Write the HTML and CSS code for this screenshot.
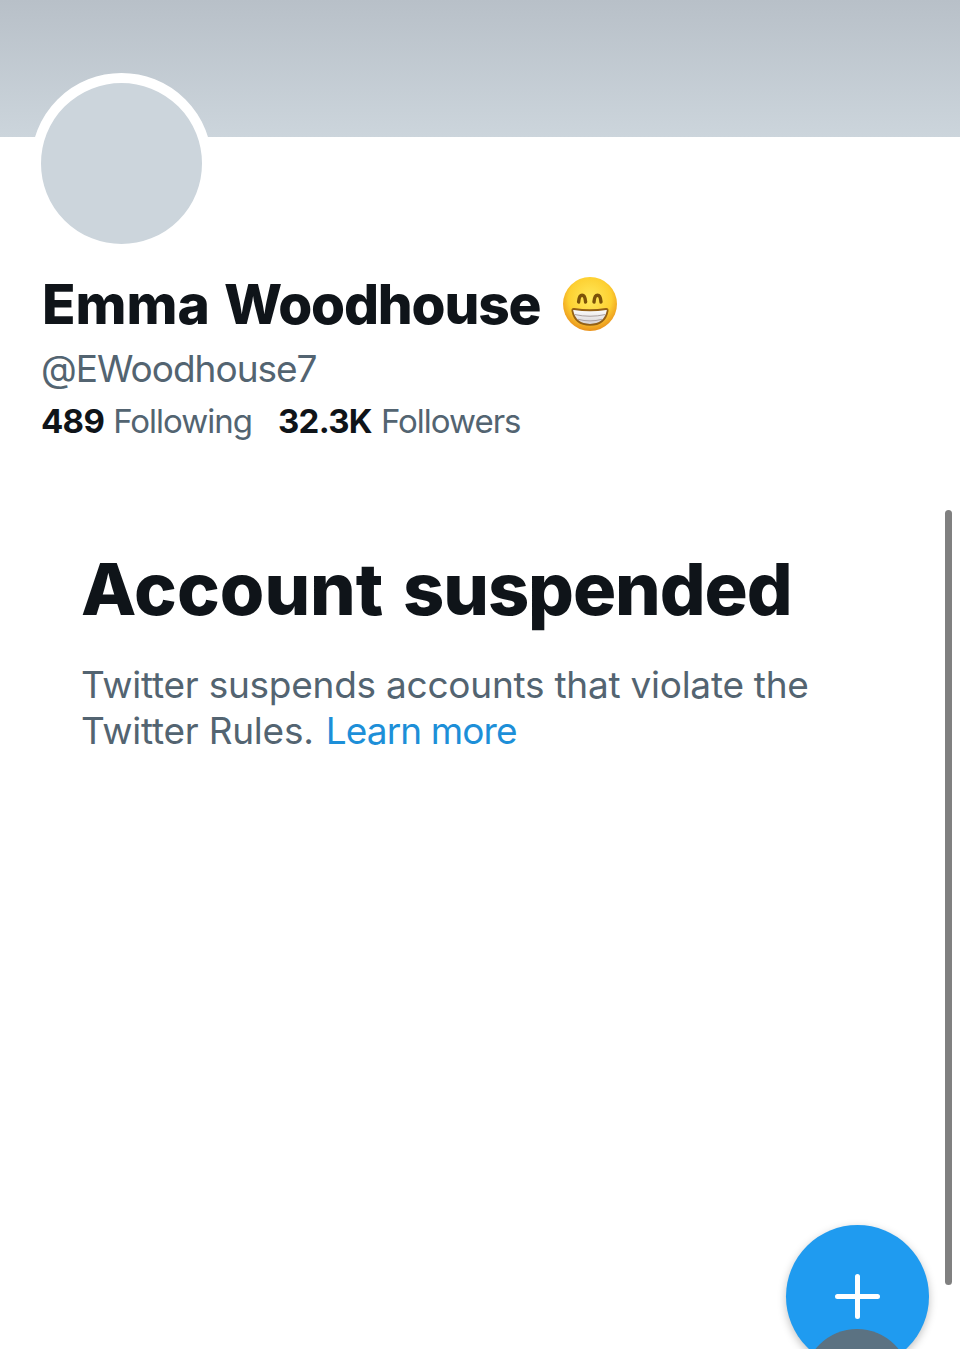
FILE: index.html
```html
<!DOCTYPE html>
<html lang="en">
<head>
  <meta charset="UTF-8" />
  <meta name="viewport" content="width=device-width, initial-scale=1.0"/>
  <title>Emma Woodhouse</title>
  <link rel="stylesheet" href="styles.css">
</head>
<body>
  <div class="banner"></div>

  <div class="profile">
    <div class="avatar"></div>
    <h2 class="name">
      <span class="name-text">Emma <span class="surname">Woodhouse</span></span>
      <svg class="emoji" viewBox="0 0 54 54">
        <defs>
          <radialGradient id="face" cx="50%" cy="40%" r="61%">
            <stop offset="0" stop-color="#ffe95c"/>
            <stop offset="0.65" stop-color="#fdd031"/>
            <stop offset="1" stop-color="#e98f1b"/>
          </radialGradient>
          <linearGradient id="teeth" x1="0" y1="0" x2="0" y2="1">
            <stop offset="0" stop-color="#ffffff"/>
            <stop offset="1" stop-color="#d5d0d2"/>
          </linearGradient>
        </defs>
        <circle cx="27" cy="27" r="27" fill="url(#face)"/>
        <path d="M15.6 25C16 20 17.4 18.3 19.1 18.3S22.2 20 22.6 25M31 25C31.4 20 32.8 18.3 34.5 18.3S37.6 20 38 25" fill="none" stroke="#7b5208" stroke-width="3.4" stroke-linecap="round"/>
        <path d="M11 32Q27 34.5 43 32Q45 31.8 44.6 34C42.7 43.5 36 47.8 27 47.8S11.3 43.5 9.4 34Q9 31.8 11 32Z" fill="url(#teeth)" stroke="#936016" stroke-width="1.8"/>
        <path d="M11.5 37.5Q27 41 42.5 37.5M15 42.3Q27 45.5 39 42.3" fill="none" stroke="#aaa0a0" stroke-width="1"/>
      </svg>
    </h2>
    <div class="handle">@EWoodhouse7</div>
    <div class="stats">
      <div class="stat"><b>489</b><span>Following</span></div>
      <div class="stat"><b>32.3K</b><span>Followers</span></div>
    </div>
  </div>

  <div class="notice">
    <h1>Account <span class="status">suspended</span></h1>
    <p>Twitter suspends accounts that violate the<br>
      Twitter Rules. <a href="#">Learn more</a></p>
  </div>

  <div class="scrollbar"></div>
  <div class="compose-area">
    <div class="compose">
      <svg viewBox="0 0 45 45">
        <path d="M22.5 2.5v40M2.5 22.5h40" stroke="#fff" stroke-width="5" stroke-linecap="round"/>
      </svg>
      <div class="touch"></div>
    </div>
  </div>
</body>
</html>
```

FILE: styles.css
```css
body {
  position: relative;
  height: 1349px;
  margin: 0;
  overflow: hidden;
  background: #fff;
  color: #0f1419;
  font-family: Inter, "Liberation Sans", sans-serif;
}
.banner {
  height: 136.5px;
  background: linear-gradient(#b8c0c8, #ccd5dc);
}
.profile {
  padding-left: 41px;
}
.avatar {
  position: relative;
  width: 161px;
  height: 161px;
  margin: -63.5px 0 0 -10px;
  border: 10px solid #fff;
  border-radius: 50%;
  background: #ccd5dc;
}
.name {
  display: flex;
  align-items: center;
  height: 64px;
  margin: 18px 0 0;
  font-size: 55px;
  font-weight: 800;
  white-space: nowrap;
}
.name-text {
  width: 521px;
  padding-left: 1px;
  word-spacing: 2px;
}
.surname {
  letter-spacing: -1.2px;
}
.emoji {
  width: 54px;
  height: 54px;
}
.handle {
  height: 46px;
  margin-top: 10px;
  font-size: 37px;
  line-height: 46px;
  letter-spacing: -1px;
  color: #536471;
}
.stats {
  display: flex;
  gap: 26px;
  height: 42px;
  margin-top: 8px;
  font-size: 33px;
  line-height: 42px;
}
.stat {
  display: flex;
  gap: 9px;
}
.stat b {
  letter-spacing: -0.7px;
}
.stat span {
  letter-spacing: -1px;
  color: #536471;
}
.notice {
  padding: 103px 0 0 81px;
  white-space: nowrap;
}
.notice h1 {
  margin: 0;
  font-size: 72px;
  font-weight: 800;
  line-height: 88px;
  word-spacing: 4px;
}
.status {
  letter-spacing: -1.1px;
}
.notice p {
  margin: 29px 0 0;
  font-size: 37px;
  line-height: 46px;
  letter-spacing: -0.25px;
  color: #536471;
}
.notice a {
  margin-left: 2px;
  letter-spacing: -0.9px;
  color: #1d8fd8;
  text-decoration: none;
}
.scrollbar {
  position: absolute;
  top: 510px;
  left: 945px;
  width: 7px;
  height: 775px;
  border-radius: 4px;
  background: #808080;
}
.compose-area {
  position: absolute;
  right: 16px;
  bottom: 0;
  height: 139px;
  padding: 15px 15px 0;
  box-sizing: border-box;
  overflow: hidden;
}
.compose {
  position: relative;
  display: flex;
  align-items: center;
  justify-content: center;
  width: 143px;
  height: 143px;
  border-radius: 50%;
  background: #1f9bf0;
  box-shadow: 0 3px 9px rgba(0, 0, 0, 0.25);
}
.compose svg {
  width: 45px;
  height: 45px;
}
.touch {
  position: absolute;
  top: 104px;
  left: 18px;
  width: 106px;
  height: 106px;
  border-radius: 50%;
  background: #5b7282;
}
```
